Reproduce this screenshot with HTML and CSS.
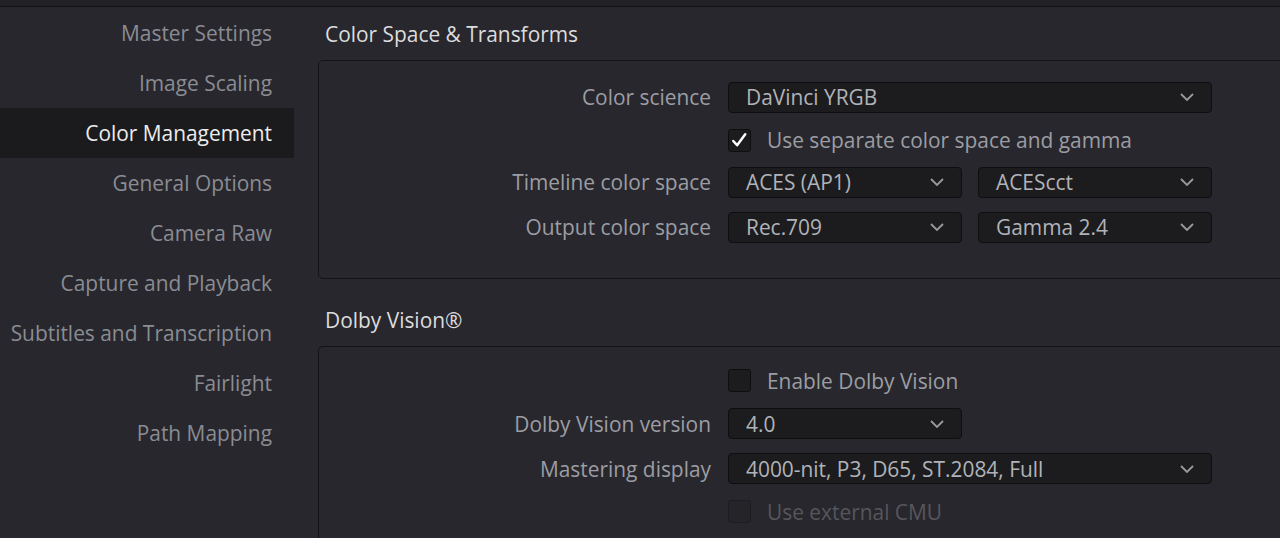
FILE: index.html
```html
<!DOCTYPE html>
<html>
<head>
<meta charset="utf-8">
<link rel="stylesheet" href="styles.css">
</head>
<body>
<div class="topbar"></div>
<div class="main">
  <nav class="sidebar">
    <div class="nav-item">Master Settings</div>
    <div class="nav-item">Image Scaling</div>
    <div class="nav-item active">Color Management</div>
    <div class="nav-item">General Options</div>
    <div class="nav-item">Camera Raw</div>
    <div class="nav-item">Capture and Playback</div>
    <div class="nav-item">Subtitles and Transcription</div>
    <div class="nav-item">Fairlight</div>
    <div class="nav-item">Path Mapping</div>
  </nav>
  <section class="content">
    <div class="heading h1">Color Space &amp; Transforms</div>
    <div class="box box1">
      <div class="row r1">
        <div class="label">Color science</div>
        <div class="select wide"><span>DaVinci YRGB</span><svg class="chev" viewBox="0 0 14 8"><path d="M1 1 L7 7 L13 1"/></svg></div>
      </div>
      <div class="row r2">
        <div class="label"></div>
        <div class="check checked"><svg viewBox="0 0 22 22"><path d="M4.5 11.5 L8.5 16 L17 4.5"/></svg></div>
        <div class="check-text">Use separate color space and gamma</div>
      </div>
      <div class="row r3">
        <div class="label">Timeline color space</div>
        <div class="select narrow"><span>ACES (AP1)</span><svg class="chev" viewBox="0 0 14 8"><path d="M1 1 L7 7 L13 1"/></svg></div>
        <div class="select narrow"><span>ACEScct</span><svg class="chev" viewBox="0 0 14 8"><path d="M1 1 L7 7 L13 1"/></svg></div>
      </div>
      <div class="row r4">
        <div class="label">Output color space</div>
        <div class="select narrow"><span>Rec.709</span><svg class="chev" viewBox="0 0 14 8"><path d="M1 1 L7 7 L13 1"/></svg></div>
        <div class="select narrow"><span>Gamma 2.4</span><svg class="chev" viewBox="0 0 14 8"><path d="M1 1 L7 7 L13 1"/></svg></div>
      </div>
    </div>
    <div class="heading h2">Dolby Vision®</div>
    <div class="box box2">
      <div class="row d1">
        <div class="label"></div>
        <div class="check"></div>
        <div class="check-text">Enable Dolby Vision</div>
      </div>
      <div class="row d2">
        <div class="label">Dolby Vision version</div>
        <div class="select narrow"><span>4.0</span><svg class="chev" viewBox="0 0 14 8"><path d="M1 1 L7 7 L13 1"/></svg></div>
      </div>
      <div class="row d3">
        <div class="label">Mastering display</div>
        <div class="select wide"><span>4000-nit, P3, D65, ST.2084, Full</span><svg class="chev" viewBox="0 0 14 8"><path d="M1 1 L7 7 L13 1"/></svg></div>
      </div>
      <div class="row d4">
        <div class="label"></div>
        <div class="check disabled"></div>
        <div class="check-text disabled">Use external CMU</div>
      </div>
    </div>
  </section>
</div>
</body>
</html>
```

FILE: styles.css
```css
html, body {
  margin: 0;
  padding: 0;
  background: #28272d;
  height: 538px;
  overflow: hidden;
  font-family: "Open Sans", "Noto Sans", sans-serif;
  font-size: 20.9px;
}

.topbar {
  height: 6px;
  background: #222126;
  border-bottom: 1px solid #121214;
}

.main {
  display: flex;
  height: 531px;
  overflow: hidden;
}

.sidebar {
  width: 294px;
  flex: none;
  padding-top: 1px;
}

.nav-item {
  height: 50px;
  line-height: 50px;
  text-align: right;
  padding-right: 22px;
  color: #8a8c93;
  white-space: nowrap;
}

.nav-item.active {
  background: #1b1b1e;
  color: #ececec;
}

.content {
  flex: none;
  width: 1010px;
  padding-left: 24px;
}

.heading {
  display: flex;
  align-items: flex-end;
  padding-left: 7px;
  line-height: 28px;
  color: #dcdcdc;
  box-sizing: border-box;
}

.h1 {
  height: 53px;
  padding-bottom: 12px;
}

.h2 {
  height: 67px;
  padding-bottom: 12px;
}

.box {
  border: 1.5px solid #141417;
  border-radius: 5px;
  box-sizing: border-box;
  display: flex;
  flex-direction: column;
}

.box1 {
  height: 219px;
  padding-top: 20.5px;
}

.box2 {
  height: 192px;
  padding-top: 18px;
  border-bottom: none;
  border-bottom-left-radius: 0;
  border-bottom-right-radius: 0;
}

.row {
  display: flex;
  align-items: center;
  height: 31px;
  flex: none;
}

.r2 { margin-top: 12px; }
.r3 { margin-top: 11px; }
.r4 { margin-top: 14px; }

.d2 { margin-top: 12px; }
.d3 { margin-top: 14px; }
.d4 { margin-top: 12px; }

.label {
  width: 392px;
  flex: none;
  text-align: right;
  color: #9b9da3;
  margin-right: 17px;
  white-space: nowrap;
}

.select {
  height: 31px;
  box-sizing: border-box;
  background: #1c1c1f;
  border: 1px solid #0e0e10;
  border-radius: 4px;
  display: flex;
  align-items: center;
  justify-content: space-between;
  padding-left: 17px;
  padding-right: 17px;
  color: #b1b3b8;
  white-space: nowrap;
}

.select.wide { width: 484px; }
.select.narrow { width: 234px; margin-right: 16px; }

.chev {
  width: 14px;
  height: 8px;
  fill: none;
  stroke: #9a9a9e;
  stroke-width: 1.8;
}

.check {
  width: 23px;
  height: 23px;
  box-sizing: border-box;
  background: #1c1c1f;
  border: 1px solid #0e0e10;
  border-radius: 3px;
  margin-right: 16px;
  flex: none;
}

.check svg {
  display: block;
  width: 21px;
  height: 21px;
  fill: none;
  stroke: #ffffff;
  stroke-width: 2.6;
  stroke-linecap: round;
  stroke-linejoin: round;
}

.check.disabled {
  background: #252429;
  border-color: #1d1d21;
}

.check-text {
  color: #9b9da3;
  white-space: nowrap;
}

.check-text.disabled {
  color: #56565c;
}
```
